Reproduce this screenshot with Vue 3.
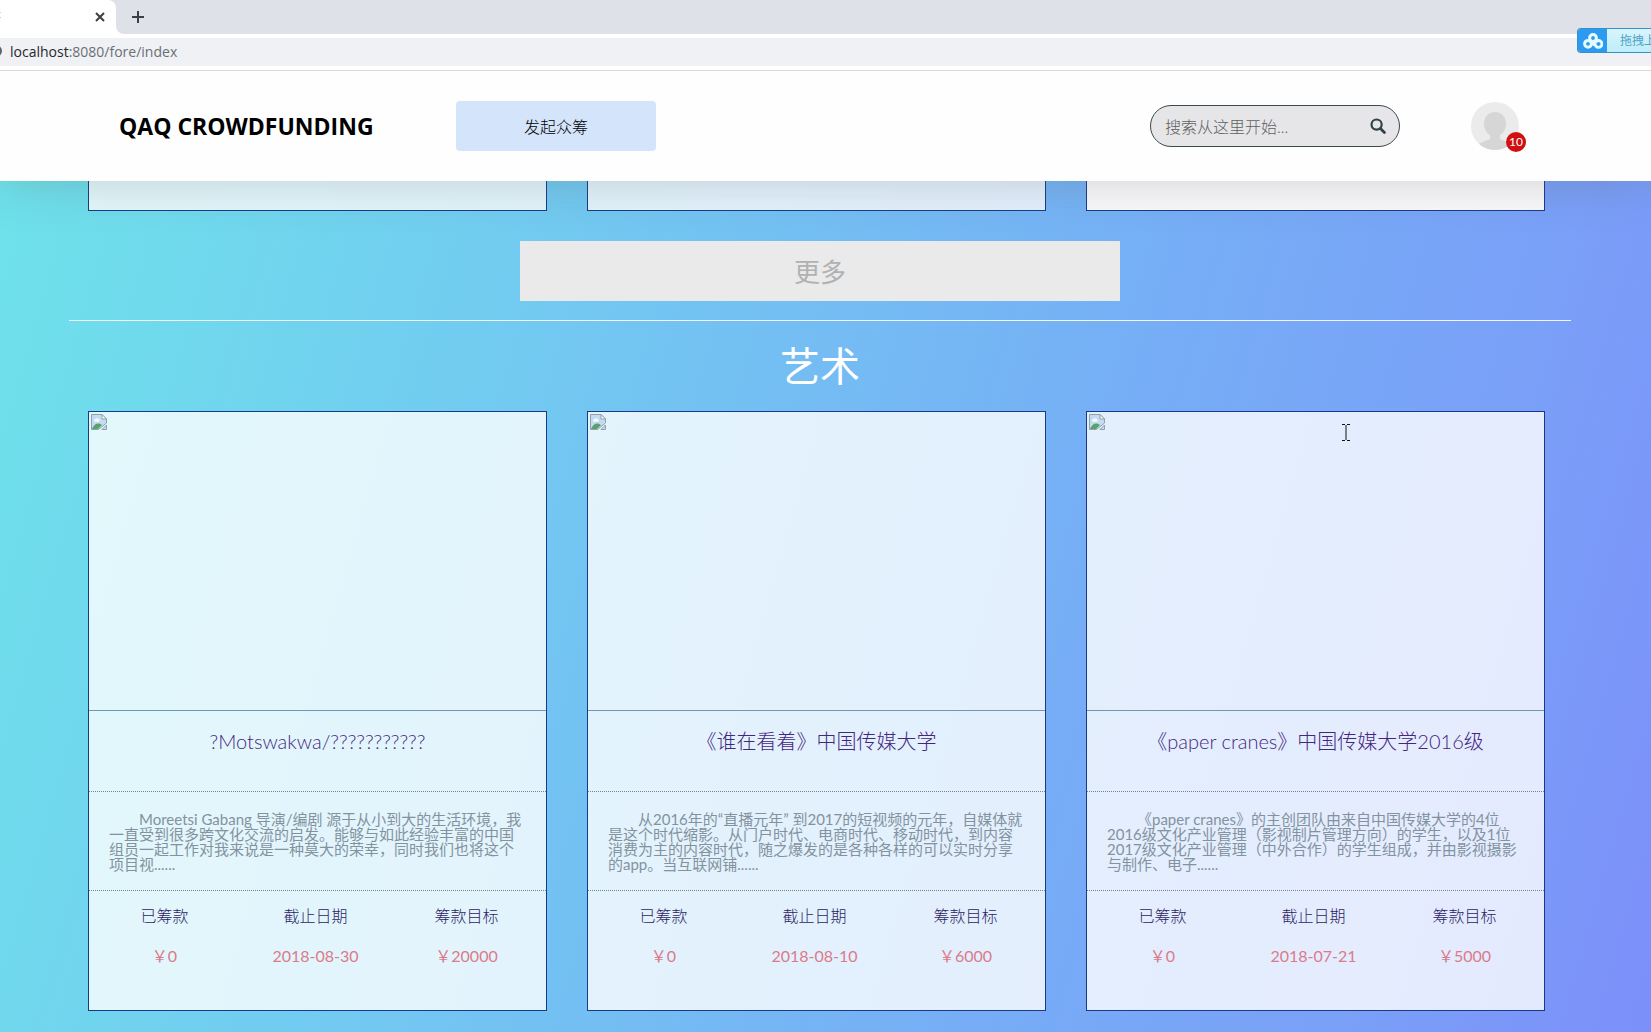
<script setup>
const projects = [
  {
    title: '?Motswakwa/???????????',
    text: 'Moreetsi Gabang 导演/编剧 源于从小到大的生活环境，我一直受到很多跨文化交流的启发。能够与如此经验丰富的中国组员一起工作对我来说是一种莫大的荣幸，同时我们也将这个项目视......',
    raised: '￥0',
    deadline: '2018-08-30',
    goal: '￥20000',
  },
  {
    title: '《谁在看着》中国传媒大学',
    text: '从2016年的“直播元年” 到2017的短视频的元年，自媒体就是这个时代缩影。从门户时代、电商时代、移动时代，到内容消费为主的内容时代，随之爆发的是各种各样的可以实时分享的app。当互联网铺......',
    raised: '￥0',
    deadline: '2018-08-10',
    goal: '￥6000',
  },
  {
    title: '《paper cranes》中国传媒大学2016级',
    text: '《paper cranes》的主创团队由来自中国传媒大学的4位2016级文化产业管理（影视制片管理方向）的学生，以及1位2017级文化产业管理（中外合作）的学生组成，并由影视摄影与制作、电子......',
    raised: '￥0',
    deadline: '2018-07-21',
    goal: '￥5000',
  },
]
</script>

<template>
  <div class="screen">
    <div class="browser">
      <div class="tabs">
        <div class="tab">
          <span class="tab-title">筹</span>
          <button class="icon-btn" aria-label="Close tab">
            <svg width="10" height="10" viewBox="0 0 10 10"><path d="M1 1l8 8M9 1l-8 8" stroke="#3c4043" stroke-width="2" /></svg>
          </button>
          <svg class="tab-curve" width="8" height="8" viewBox="0 0 8 8"><path d="M0 0a8 8 0 0 0 8 8H0z" fill="#fff" /></svg>
        </div>
        <button class="icon-btn" aria-label="New tab">
          <svg width="12" height="12" viewBox="0 0 12 12"><path d="M6 0v12M0 6h12" stroke="#3c4043" stroke-width="2" /></svg>
        </button>
      </div>
      <div class="address">
        <svg class="info" width="2" height="12" viewBox="10 0 2 12"><circle cx="6" cy="6" r="5" fill="none" stroke="#5f6368" stroke-width="2" /></svg>
        <span class="url"><b>localhost</b>:8080/fore/index</span>
      </div>
    </div>

    <div class="netdisk">
      <span class="netdisk-logo">
        <svg width="20" height="16" viewBox="0 0 20 16" fill="none" stroke="#e4fbff" stroke-width="3">
          <circle cx="10" cy="5" r="3.4" />
          <circle cx="5" cy="10.8" r="3.4" />
          <path d="M10 8.8l3 4.400a3.400 3.400 0 1 0 .3-4.800l-3.600 3.800" />
        </svg>
      </span>
      <span class="netdisk-text">拖拽上</span>
    </div>

    <header class="header">
      <h1 class="logo">QAQ CROWDFUNDING</h1>
      <button class="launch">发起众筹</button>
      <form class="search" @submit.prevent>
        <input type="text" aria-label="搜索" placeholder="搜索从这里开始..." />
        <button class="icon-btn" aria-label="搜索">
          <svg width="16" height="16" viewBox="0 0 16 16" fill="none" stroke="#2f4247">
            <circle cx="6.6" cy="6.6" r="5.1" stroke-width="2.2" />
            <path d="M10.4 10.4l4 4" stroke-width="2.8" stroke-linecap="round" />
          </svg>
        </button>
      </form>
      <a class="avatar" href="#" aria-label="10">
        <svg width="48" height="48" viewBox="0 0 48 48">
          <defs><clipPath id="round"><circle cx="24" cy="24" r="24" /></clipPath></defs>
          <g clip-path="url(#round)">
            <rect width="48" height="48" fill="#ebebeb" />
            <path d="M24 10c7 0 11 5 11 12 0 5-2.600 9-6 11v4c3 2 9 2.500 12 6v6H7v-6c3-3.500 9-4 12-6v-4c-3.400-2-6-6-6-11 0-7 4-12 11-12z" fill="#d6d6d6" />
          </g>
        </svg>
        <span class="badge">10</span>
      </a>
    </header>

    <main class="content">
      <div class="row">
        <div v-for="n in 3" :key="n" class="card-end"></div>
      </div>
      <button class="more">更多</button>
      <hr class="divider" />
      <h2 class="category">艺术</h2>
      <div class="row">
        <article v-for="p in projects" :key="p.title" class="card">
          <div class="cover">
            <svg width="16" height="16" viewBox="0 0 16 16">
              <path d="M.5.5h10.500l4.500 4.500v4L7.500 15.500h-7z" fill="#c3dcf4" stroke="#93a1a8" />
              <path d="M3 6.500a1.500 1.500 0 0 1 1.500-1.500 2 2 0 0 1 3.500.5 1.200 1.200 0 0 1 0 2.200H4A1.200 1.200 0 0 1 3 6.500z" fill="#f4faff" />
              <path d="M1 15c2-5 6-7 10-4l-4 4z" fill="#58a36b" />
              <path d="M11 .5V5h4.500z" fill="#fff" stroke="#93a1a8" />
              <path d="M15.500 11v4.500H11z" fill="#c3dcf4" stroke="#93a1a8" />
            </svg>
          </div>
          <h3 class="title"><a href="#">{{ p.title }}</a></h3>
          <p class="text">{{ p.text }}</p>
          <table class="stats">
            <thead>
              <tr><th>已筹款</th><th>截止日期</th><th>筹款目标</th></tr>
            </thead>
            <tbody>
              <tr><td>{{ p.raised }}</td><td>{{ p.deadline }}</td><td>{{ p.goal }}</td></tr>
            </tbody>
          </table>
        </article>
      </div>
    </main>

    <svg class="cursor" width="8" height="17" viewBox="0 0 8 17"><path d="M0 .5h3M5 .5h3M4 1v15M0 16.500h3M5 16.500h3" stroke="#111" fill="none" /></svg>
  </div>
</template>

<style>
body {
  margin: 0;
  overflow: hidden;
}
</style>

<style scoped>
* {
  box-sizing: border-box;
}
.screen {
  position: relative;
  min-height: 100vh;
  overflow: hidden;
  font-family: Lato, "Noto Sans CJK SC", sans-serif;
  font-size: 16px;
  background: linear-gradient(106deg, #6ee4ea 0%, #73c3f2 40%, #76adf6 65%, #7a9ff8 85%, #7c8ffa 100%);
}
button {
  padding: 0;
  border: 0;
  font-family: inherit;
}
.icon-btn {
  display: flex;
  background: none;
}
.browser {
  position: relative;
  z-index: 2;
  background: #fff;
  border-bottom: 1px solid #d9dadd;
  font-family: "Open Sans", "Noto Sans CJK SC", sans-serif;
}
.tabs {
  display: flex;
  align-items: center;
  gap: 16px;
  height: 34px;
  background: #dee1e8;
}
.tab {
  position: relative;
  display: flex;
  align-items: center;
  justify-content: space-between;
  width: 116px;
  height: 34px;
  padding-right: 11px;
  background: #fff;
  border-radius: 0 8px 0 0;
}
.tab-title {
  width: 1px;
  overflow: hidden;
  direction: rtl;
  white-space: nowrap;
  font-size: 12px;
  color: #5f6368;
}
.tab-curve {
  position: absolute;
  left: 100%;
  bottom: 0;
}
.address {
  display: flex;
  align-items: center;
  gap: 8px;
  height: 28px;
  margin: 4px 0;
  padding-bottom: 2px;
  background: #eff1f4;
  font-size: 14px;
  color: #6b6f74;
}
.url b {
  font-weight: 400;
  color: #26282b;
}
.netdisk {
  position: absolute;
  top: 28px;
  right: 0;
  z-index: 3;
  display: flex;
  width: 74px;
  height: 25px;
  overflow: hidden;
  border: 1px solid #3a8fc4;
  border-right: 0;
  border-radius: 4px 0 0 4px;
  background: linear-gradient(#d9f4fd, #bdeefa);
}
.netdisk-logo {
  display: flex;
  flex: none;
  align-items: center;
  justify-content: center;
  width: 29px;
  background: #2b9af0;
}
.netdisk-text {
  flex: none;
  padding-left: 13px;
  font-size: 12px;
  line-height: 23px;
  color: #4fa3c4;
}
.header {
  position: relative;
  z-index: 1;
  display: flex;
  align-items: center;
  height: 110px;
  padding: 0 132px 0 119px;
  background: #fefefe;
  box-shadow: 0 0 50px rgba(80, 80, 80, 0.25);
}
.logo {
  flex: 0 0 337px;
  margin: 0;
  font: 700 23px/32px "Open Sans", sans-serif;
  color: #000;
}
.launch {
  width: 200px;
  height: 50px;
  border-radius: 4px;
  background: #d4e5fb;
  font-size: 16px;
  font-weight: 300;
  color: #000;
}
.search {
  display: flex;
  align-items: center;
  width: 250px;
  height: 42px;
  margin-left: auto;
  padding: 0 13px 0 14px;
  border: 1px solid #3c4a4e;
  border-radius: 21px;
  background: #e6e6e8;
}
.search input {
  flex: 1;
  min-width: 0;
  padding: 0;
  border: 0;
  outline: 0;
  background: none;
  font: 300 16px Lato, "Noto Sans CJK SC", sans-serif;
}
.search input::placeholder {
  color: #606060;
}
.avatar {
  position: relative;
  display: flex;
  margin-left: 71px;
}
.badge {
  position: absolute;
  right: -7px;
  bottom: -2px;
  width: 20px;
  height: 20px;
  border-radius: 50%;
  background: #cf1111;
  font-size: 12px;
  line-height: 20px;
  text-align: center;
  color: #fff;
}
.content {
  padding: 0 80px 20px 69px;
}
.row {
  display: grid;
  grid-template-columns: repeat(3, 1fr);
  gap: 40px;
  padding: 0 26px 0 19px;
}
.card-end {
  height: 30px;
  border: 1px solid #1b3a86;
  border-top: 0;
  background: rgba(255, 255, 255, 0.8);
}
.card-end:last-child {
  background: #fafafd;
}
.more {
  display: block;
  width: 600px;
  height: 60px;
  margin: 30px auto 19px;
  padding-bottom: 2px;
  background: #eaeaea;
  font-size: 26px;
  color: #b0b1b3;
}
.divider {
  height: 1px;
  margin: 0;
  border: 0;
  background: #f2f6fa;
}
.category {
  margin: 15px 0;
  font-size: 40px;
  font-weight: 400;
  line-height: 60px;
  text-align: center;
  color: #fff;
}
.card {
  height: 600px;
  border: 1px solid #1b3a86;
  background: rgba(255, 255, 255, 0.8);
}
.cover {
  height: 299px;
  padding: 2px;
  border-bottom: 1px solid #6c9bad;
}
.title {
  height: 81px;
  margin: 0;
  padding-top: 15px;
  border-bottom: 1px dotted #6f8496;
  font-size: 20px;
  font-weight: 300;
  line-height: 30px;
  text-align: center;
}
.title a {
  color: #45267f;
  text-decoration: none;
}
.text {
  height: 99px;
  margin: 0;
  padding: 20px 20px 0;
  border-bottom: 1px dotted #6f8496;
  font-size: 15px;
  line-height: 15px;
  text-indent: 30px;
  text-spacing-trim: space-all;
  color: #82929e;
}
.stats {
  width: calc(100% - 4px);
  margin-top: 4px;
  table-layout: fixed;
  border-collapse: collapse;
  text-align: center;
}
.stats th,
.stats td {
  height: 40px;
  padding: 0;
  font-weight: 400;
}
.stats th {
  font-weight: 300;
  color: #2c1d62;
}
.stats td {
  color: #db7b8a;
}
.cursor {
  position: absolute;
  left: 1342px;
  top: 424px;
}
</style>
